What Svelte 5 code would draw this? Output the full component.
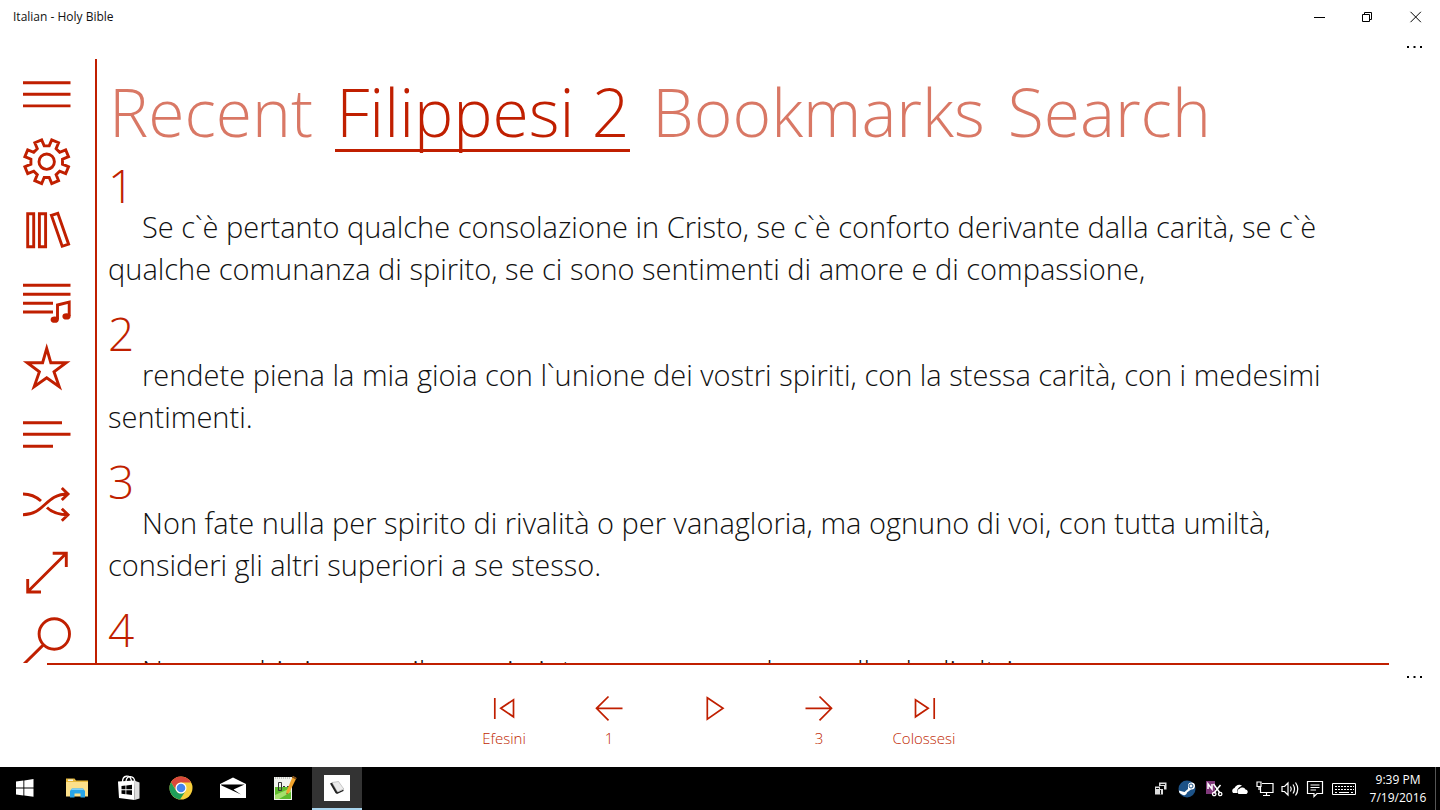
<script lang="ts">
    type Icon = { label: string; d: string; fill?: string };
    type Verse = { number: number; text: string };

    // eight-toothed cog around the centre of a 48px box
    const gearPath = () => {
        const point = (angle: number, radius: number) => {
            const a = (angle * Math.PI) / 180;
            const x = 23.7 + radius * Math.sin(a);
            const y = 23.7 - radius * Math.cos(a);
            return `${x.toFixed(2)} ${y.toFixed(2)}`;
        };
        const points: string[] = [];
        for (let k = 0; k < 8; k++) {
            points.push(point(45 * k - 9, 16), point(45 * k + 9, 16));
            points.push(point(45 * k + 13, 22.4), point(45 * k + 32, 22.4));
        }
        return `M${points.join("L")}Z`;
    };

    const railIcons: Icon[] = [
        { label: "Menu", d: "M0 12.7H47.5M0 24.2H47.5M0 35.9H47.5" },
        { label: "Settings", d: gearPath() + "M16 23.7a7.7 7.7 0 1 0 15.4 0a7.7 7.7 0 1 0-15.4 0Z" },
        {
            label: "Library",
            d: "M4.7 7.7H10.7V40.7H4.7ZM16.4 7.7H22.6V40.7H16.4ZM28.4 9.3L34.8 7.3L45.6 38.2L39.2 40.3Z",
        },
        {
            label: "Playlist",
            d: "M0 11.3H47.5M0 20.3H47.5M0 29.3H30M0 38H30M34.5 45.5V31L46.2 28V42",
            fill: "M27.6 45.7a4.1 3.1 0 1 0 8.2 0a4.1 3.1 0 1 0-8.2 0ZM39.4 42.4a4.1 3.1 0 1 0 8.2 0a4.1 3.1 0 1 0-8.2 0Z",
        },
        {
            label: "Favorites",
            d: "M23.7 6.5L27.8 20.7H43.2L31 29.8L36.2 44.6L23.7 35.7L11.2 44.6L16.4 29.8L4.2 20.7H19.6Z",
        },
        { label: "Text", d: "M0 12.7H39M0 24.3H47.5M0 36.3H30" },
        {
            label: "Shuffle",
            d: "M0 36.7C22 36.7 22 16 45 16M0 16C8 16 13 18.5 18 23M24 29.5C29 34.5 35 36.7 45 36.7M38.8 10L45 16L38.8 22M38.8 30.7L45 36.7L38.8 42.7",
        },
        { label: "Full screen", d: "M4.7 45.7L43.3 7.3M29.7 7.3H43.3V21M4.7 33V46H18" },
        { label: "Find", d: "M16.1 20a15.2 15.2 0 1 0 30.4 0a15.2 15.2 0 1 0-30.4 0ZM20.6 30.6L0 51" },
    ];

    const tabs = ["Recent", "Filippesi 2", "Bookmarks", "Search"];
    let currentTab = $state("Filippesi 2");

    const verses: Verse[] = [
        {
            number: 1,
            text: "Se c`è pertanto qualche consolazione in Cristo, se c`è conforto derivante dalla carità, se c`è qualche comunanza di spirito, se ci sono sentimenti di amore e di compassione,",
        },
        {
            number: 2,
            text: "rendete piena la mia gioia con l`unione dei vostri spiriti, con la stessa carità, con i medesimi sentimenti.",
        },
        {
            number: 3,
            text: "Non fate nulla per spirito di rivalità o per vanagloria, ma ognuno di voi, con tutta umiltà, consideri gli altri superiori a se stesso.",
        },
        {
            number: 4,
            text: "Non cerchi ciascuno il proprio interesse, ma anche quello degli altri.",
        },
    ];

    const playerIcons = [
        { name: "Previous book", text: "Efesini", d: "M4.8 4V25M10.8 14.3L23.5 5.8V22.8Z" },
        { name: "Previous chapter", text: "1", d: "M27.5 14.3H1.5M13.5 2.5L1.5 14.3L13.5 26.3" },
        { name: "Play", text: "", d: "M7.3 3.8L23 14.3L7.3 25.2Z" },
        { name: "Next chapter", text: "3", d: "M.5 14.3H26.5M14.5 2.5L26.5 14.3L14.5 26.3" },
        { name: "Next book", text: "Colossesi", d: "M24.2 4V25M18.2 14.3L5.5 5.8V22.8Z" },
    ];
</script>

{#snippet dots()}
    <svg width="16" height="4" viewBox="0 0 16 4">
        <path d="M0 1h2v2H0zM6.500 1h2v2h-2zM13 1h2v2h-2z" />
    </svg>
{/snippet}

<div class="desktop">
    <header class="titlebar">
        <span class="title">Italian - Holy Bible</span>
        <button aria-label="Minimize">
            <svg width="12" height="12" viewBox="0 0 12 12"><path d="M0 6.500H11" /></svg>
        </button>
        <button aria-label="Restore">
            <svg width="12" height="12" viewBox="0 0 12 12">
                <path d="M.5 3.500H7.500V10.500H.5ZM2.500 3.500V1.500H9.500V8.500H7.500" />
            </svg>
        </button>
        <button aria-label="Close">
            <svg width="12" height="12" viewBox="0 0 12 12"><path d="M.5 .8L10.900 11.200M10.900 .8L.5 11.200" /></svg>
        </button>
    </header>
    <div class="more-row">
        <button class="more" aria-label="More">{@render dots()}</button>
    </div>

    <div class="app">
        <nav class="rail">
            {#each railIcons as icon}
                <button aria-label={icon.label}>
                    <svg width="48" height="48" viewBox="0 0 48 48">
                        <path d={icon.d} />
                        {#if icon.fill}
                            <path class="solid" d={icon.fill} />
                        {/if}
                    </svg>
                </button>
            {/each}
        </nav>
        <main>
            <div class="tabs">
                {#each tabs as tab}
                    <button class:current={tab === currentTab} onclick={() => (currentTab = tab)}>{tab}</button>
                {/each}
            </div>
            {#each verses as verse}
                <article>
                    <h2>{verse.number}</h2>
                    <p>{verse.text}</p>
                </article>
            {/each}
        </main>
    </div>

    <div class="rule"></div>
    <div class="player">
        <div class="player-buttons">
            {#each playerIcons as icon}
                <button aria-label={icon.name}>
                    <svg width="28" height="28" viewBox="0 0 28 28"><path d={icon.d} /></svg>
                    <span>{icon.text}</span>
                </button>
            {/each}
        </div>
        <button class="more" aria-label="More">{@render dots()}</button>
    </div>

    <footer class="taskbar">
        <button class="task" aria-label="Start">
            <svg width="18" height="18" viewBox="0 0 18 18">
                <path fill="#fff" d="M0 2.600L7.400 1.500V8.500H0ZM8.300 1.400L17.500 0V8.500H8.300ZM0 9.400H7.400V16.400L0 15.400ZM8.300 9.400H17.500V17.800L8.300 16.500Z" />
            </svg>
        </button>
        <button class="task" aria-label="File Explorer">
            <svg width="24" height="22" viewBox="0 0 24 22">
                <path fill="#e8b93c" d="M1 1.500H9.500L11 3.500H23V19H1Z" />
                <path fill="#f4f4e8" d="M3 2.500H8V4H3Z" />
                <path fill="#fce08a" d="M1 5H23V19.500H1Z" />
                <path fill="#28a5e8" d="M5 20.500V14L7 11.500H18L20 14V20.500H15.500V16.500H9.500V20.500Z" />
                <path fill="#7fd0f8" d="M7 11.500H18L19 13H6Z" />
            </svg>
        </button>
        <button class="task" aria-label="Store">
            <svg width="24" height="26" viewBox="0 0 24 26">
                <path fill="none" stroke="#fff" stroke-width="1.300" d="M5.500 7C5.500 0 13 -1 14.500 6M9 6C10 0 17 0 18 7" />
                <path fill="#fff" d="M1 6.500L17 5.500L17.500 25L2 23Z" />
                <path fill="#ddd" d="M17 5.500L22.500 7.500V23.500L17.500 25Z" />
                <path d="M4.500 11L8.500 10.500V14.300H4.500ZM9.300 10.400L15 9.700V14.300H9.300ZM4.500 15.200H8.500V19.200L4.500 18.800ZM9.300 15.200H15V20L9.300 19.300Z" />
            </svg>
        </button>
        <button class="task" aria-label="Chrome">
            <svg width="24" height="24" viewBox="0 0 24 24">
                <circle cx="12" cy="12" r="11.500" fill="#f7cf3c" />
                <path fill="#d9483b" d="M2 6.300A11.500 11.500 0 0 1 22 6.500H12A5.500 5.500 0 0 0 6.900 13.800Z" />
                <path fill="#1f9d59" d="M2 6.300A11.500 11.500 0 0 0 11 23.500L16.600 15A5.500 5.500 0 0 1 7 14.500Z" />
                <circle cx="12" cy="12" r="5.500" fill="#fff" />
                <circle cx="12" cy="12" r="4.300" fill="#4584ee" />
            </svg>
        </button>
        <button class="task" aria-label="Mail">
            <svg width="26" height="22" viewBox="0 0 26 22">
                <path fill="#fff" d="M0 7L13 .5L26 7V21H0Z" />
                <path d="M1 7.500H24.500L13.500 12.500L21 17.500L1.500 8.500Z" />
            </svg>
        </button>
        <button class="task" aria-label="Notepad++">
            <svg width="24" height="26" viewBox="0 0 24 26">
                <path fill="#f1f3ee" d="M1 2H19V25H1Z" />
                <path fill="#5dbb2c" d="M2 12H18V24H2Z" />
                <path fill="#a5e06d" d="M2 20L18 13V17L6 24H2Z" />
                <path fill="none" stroke="#999" stroke-dasharray="1 1" d="M2 3H18" />
                <path fill="none" stroke="#333" d="M5.500 7.500H8.500V15.500H5.500ZM10 11.500H12M14 11.500H16" />
                <path fill="#f2a32b" d="M20 1L23.500 3L16 18L13.500 19.500V16Z" />
                <path fill="#7a4a18" d="M20 1L23.500 3L22.700 4.600L19.200 2.600ZM13.500 19.500V17.700L15 18.600Z" />
            </svg>
        </button>
        <button class="task active" aria-label="Holy Bible">
            <svg width="26" height="26" viewBox="0 0 26 26">
                <path fill="#fff" d="M0 0H26V26H0Z" />
                <path fill="#222" d="M6 8.500L8.500 7.500L14 17L19.500 14.500V16L13 19L11.500 18Z" />
                <path fill="#ececec" stroke="#999" stroke-width=".5" d="M8 7.500L14.500 6.500L19.800 14L13.500 17Z" />
            </svg>
        </button>

        <div class="tray">
            <svg width="20" height="20" viewBox="0 0 20 20">
                <path fill="#ddd" d="M8 3.500H15.500V10.500H13V7H8ZM4 7.500H9V10H12V15.500H4Z" />
                <path fill="none" stroke="#111" d="M9.500 5.500H14M5 9.500H8M9.500 11V15.500" />
            </svg>
            <svg width="22" height="20" viewBox="0 0 22 20">
                <circle cx="11" cy="10" r="8.500" fill="#1c5287" />
                <path fill="#fff" d="M2.800 11.500L8.500 13L12 10L12 6.500A3.500 3.500 0 1 1 15 10.500L11 13.500A3 3 0 0 1 6 15.500L3.500 14Z" />
                <circle cx="15" cy="7" r="2" fill="none" stroke="#1c5287" />
            </svg>
            <svg width="22" height="20" viewBox="0 0 22 20">
                <path fill="#80397b" d="M3 2H12V15H3Z" />
                <path fill="none" stroke="#fff" stroke-width="1.500" d="M5 10V5L9 10V5M10.500 5L17 14M17.500 6L11 14" />
                <path fill="none" stroke="#fff" stroke-width="1.300" d="M9.500 15a1.700 1.700 0 1 0 3.400 0a1.700 1.700 0 1 0-3.400 0M15.500 15a1.700 1.700 0 1 0 3.400 0a1.700 1.700 0 1 0-3.400 0" />
            </svg>
            <svg width="20" height="20" viewBox="0 0 20 20">
                <path fill="#fff" d="M3 14A3 3 0 0 1 4.500 9A5 5 0 0 1 12 6.500L9 8.500A5 5 0 0 0 7.500 14Z" />
                <path fill="#fff" d="M8.500 15A3 3 0 0 1 9.500 9.800A3.600 3.600 0 0 1 15.500 10.500A2.400 2.400 0 0 1 16.500 15Z" />
            </svg>
            <svg width="20" height="20" viewBox="0 0 20 20">
                <path fill="none" stroke="#fff" stroke-width="1.200" d="M7 4.500H18V13.500H5.500V8M11.500 13.500V16.500M8 16.500H15M2 3H6V7.500H2ZM4 7.500V11" />
            </svg>
            <svg width="20" height="20" viewBox="0 0 20 20">
                <path fill="none" stroke="#fff" stroke-width="1.200" d="M2 7.500H4.500L8 4V16L4.500 12.500H2ZM10.500 7.500Q12 10 10.500 12.500M13 5.500Q16 10 13 14.500M15.500 3.500Q20 10 15.500 16.500" />
            </svg>
            <svg width="20" height="20" viewBox="0 0 20 20">
                <path fill="none" stroke="#fff" stroke-width="1.200" d="M2.500 2.500H17.500V14.500H12L9 17.500V14.500H2.500ZM5.500 6H14.500M5.500 8.500H14.500M5.500 11H11" />
            </svg>
            <svg width="28" height="20" viewBox="0 0 28 20">
                <path fill="none" stroke="#fff" d="M2.500 4.500H25.500V15.500H2.500Z" />
                <path fill="none" stroke="#fff" stroke-dasharray="2 1" d="M5 7.500H24M5 10.500H24" />
                <path fill="none" stroke="#fff" d="M5 13.500H7M9 13.500H19M21 13.500H23" />
            </svg>
            <div class="clock">
                <span>9:39 PM</span>
                <span>7/19/2016</span>
            </div>
            <div class="show-desktop"></div>
        </div>
    </footer>
</div>

<style>
    :global(body) {
        margin: 0;
        background: #fff;
    }
    .desktop {
        --accent: #c01f00;
        display: flex;
        flex-direction: column;
        height: 100vh;
        overflow: hidden;
        font-family: "Open Sans", "Noto Sans", sans-serif;
        color: #111;
    }
    button {
        border: 0;
        padding: 0;
        background: none;
        font: inherit;
        color: inherit;
        cursor: pointer;
    }
    svg {
        display: block;
        overflow: visible;
    }
    .titlebar {
        display: flex;
        align-items: center;
        height: 33px;
        font-size: 12px;
    }
    .title {
        flex: 1;
        padding-left: 13px;
    }
    .titlebar button {
        display: grid;
        place-items: center;
        width: 48px;
        height: 33px;
    }
    .titlebar path {
        fill: none;
        stroke: #000;
    }
    .more-row {
        display: flex;
        justify-content: flex-end;
        height: 26px;
    }
    .more {
        display: grid;
        place-items: center;
        width: 50px;
        height: 28px;
    }
    .app {
        display: flex;
        flex: 1;
        min-height: 0;
    }
    .rail {
        display: flex;
        flex-direction: column;
        gap: 20px;
        padding: 11px 24px 0 23px;
        border-right: 2px solid var(--accent);
        overflow: hidden;
    }
    .rail path {
        fill: none;
        stroke: var(--accent);
        stroke-width: 2.9;
        stroke-miterlimit: 6;
    }
    .rail .solid {
        fill: var(--accent);
        stroke: none;
    }
    main {
        flex: 1;
        padding: 16px 90px 0 11px;
        overflow: hidden;
    }
    .tabs {
        display: flex;
        gap: 21px;
        margin-bottom: 13px;
        font-size: 66px;
        font-weight: 300;
        line-height: 72px;
        white-space: nowrap;
    }
    .tabs button {
        padding: 0 1px 2px;
        border-bottom: 3px solid transparent;
        color: var(--accent);
        opacity: 0.6;
    }
    .tabs .current {
        border-color: var(--accent);
        opacity: 1;
    }
    article {
        margin-bottom: 23px;
    }
    h2 {
        margin: 0;
        font-size: 46px;
        font-weight: 300;
        line-height: 41px;
        color: var(--accent);
    }
    p {
        margin: 0;
        font-size: 29px;
        font-weight: 300;
        line-height: 42px;
        text-indent: 34px;
    }
    .rule {
        height: 2px;
        margin: 0 51px 0 47px;
        background: var(--accent);
    }
    .player {
        display: flex;
        align-items: flex-start;
        height: 102px;
    }
    .player .more {
        height: 24px;
    }
    .player-buttons {
        display: flex;
        flex: 1;
        justify-content: center;
        padding: 29px 0 0 38px;
        font-size: 15px;
        font-weight: 300;
        line-height: 20px;
        color: var(--accent);
    }
    .player-buttons button {
        display: flex;
        flex-direction: column;
        align-items: center;
        gap: 6px;
        width: 105px;
    }
    .player-buttons path {
        fill: none;
        stroke: var(--accent);
        stroke-width: 1.7;
    }
    .taskbar {
        display: flex;
        gap: 2px;
        height: 43px;
        background: #000;
    }
    .task {
        display: grid;
        place-items: center;
        width: 50px;
        border-bottom: 2px solid transparent;
    }
    .active {
        background: #333;
        border-color: #a9d5ee;
    }
    .tray {
        display: flex;
        flex: 1;
        align-items: center;
        justify-content: flex-end;
        gap: 5px;
    }
    .clock {
        display: flex;
        flex-direction: column;
        align-items: center;
        width: 64px;
        padding-left: 3px;
        font-size: 12px;
        line-height: 18px;
        color: #fff;
    }
    .show-desktop {
        width: 4px;
        height: 43px;
        border-left: 1px solid #555;
    }
</style>
